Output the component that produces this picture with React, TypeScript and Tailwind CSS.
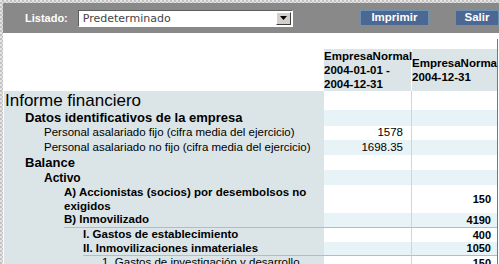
const rows = [
  { label: "Informe financiero", cell: "pl-[1px]", inner: "", text: "text-[17px] leading-[19px]", h: "h-[19px]", v1: "", v2: "" },
  { label: "Datos identificativos de la empresa", cell: "pl-[21px]", inner: "", text: "text-[13px] font-bold", h: "h-[16px]", v1: "", v2: "" },
  { label: "Personal asalariado fijo (cifra media del ejercicio)", cell: "pl-[40px]", inner: "", text: "text-[11.5px]", h: "h-[14px]", v1: "1578", v2: "" },
  { label: "Personal asalariado no fijo (cifra media del ejercicio)", cell: "pl-[40px]", inner: "", text: "text-[11.5px]", h: "h-[15px]", v1: "1698.35", v2: "" },
  { label: "Balance", cell: "pl-[21px]", inner: "", text: "text-[13px] font-bold", h: "h-[15px]", v1: "", v2: "" },
  { label: "Activo", cell: "pl-[40px]", inner: "", text: "text-[12px] font-bold", h: "h-[15px]", v1: "", v2: "" },
  { label: "A) Accionistas (socios) por desembolsos no exigidos", cell: "pl-[60px] pr-[6px]", inner: "", text: "text-[11.5px] font-bold leading-[14px]", h: "h-[28px]", v1: "", v2: "150" },
  { label: "B) Inmovilizado", cell: "pl-[60px]", inner: "", text: "text-[11.5px] font-bold", h: "h-[14px]", v1: "", v2: "4190" },
  { label: "I. Gastos de establecimiento", cell: "pl-[60px]", inner: "border-t border-[#a9c1c8] pl-[19px]", text: "text-[11.5px] font-bold", h: "h-[15px]", v1: "", v2: "400" },
  { label: "II. Inmovilizaciones inmateriales", cell: "pl-[79px]", inner: "", text: "text-[11.5px] font-bold", h: "h-[13px]", v1: "", v2: "1050" },
  { label: "1. Gastos de investigación y desarrollo", cell: "pl-[79px]", inner: "border-t border-[#a9c1c8] pl-[19px]", text: "text-[11.5px]", h: "h-[15px]", v1: "", v2: "150" },
];

function Toolbar() {
  return (
    <div className="flex h-[30px] items-center bg-[#898989] pl-[22px]">
      <span className="text-[11px] font-bold text-white">Listado:</span>

      {/* select */}
      <div className="ml-[10px] flex h-[17px] w-[224px] items-center border border-t-[#5e5e5e] border-l-[#5e5e5e] border-b-white border-r-white bg-white">
        <span className="flex-1 pl-[4px] font-['DejaVu_Sans',sans-serif] text-[11px] leading-none text-[#444]">
          Predeterminado
        </span>
        <div className="mr-[1px] flex h-[13px] w-[15px] items-center justify-center border border-t-white border-l-white border-b-[#404040] border-r-[#404040] bg-[#d4d0c8]">
          <svg width="7" height="4" viewBox="0 0 7 4">
            <path d="M0 0h7L3.5 4z" fill="#000" />
          </svg>
        </div>
      </div>

      <button className="ml-[67px] h-[16px] w-[72px] border border-[#6a93b3] bg-[#4b6792] text-[11.5px] leading-none font-bold text-white">
        Imprimir
      </button>
      <button className="ml-[26px] h-[16px] w-[44px] shrink-0 border border-[#6a93b3] bg-[#4b6792] text-[11.5px] leading-none font-bold text-white">
        Salir
      </button>
    </div>
  );
}

function Report() {
  return (
    <div className="flex h-[231px] bg-white">
      <div className="pt-[16px] pl-[1px]">
        {/* column headers */}
        <div className="flex h-[42px]">
          <div className="w-[320px]" />
          <div className="flex w-[88px] items-center border-r border-white bg-[#dbe5e7] text-[11.5px] leading-[14px] font-bold text-black">
            <div>
              EmpresaNormal
              <br />
              2004-01-01 -
              <br />
              2004-12-31
            </div>
          </div>
          <div className="flex w-[85px] items-center overflow-hidden bg-[#dbe5e7] text-[11.5px] leading-[14px] font-bold whitespace-nowrap text-black">
            <div>
              EmpresaNormal
              <br />
              2004-12-31
            </div>
          </div>
        </div>

        {/* rows */}
        {rows.map((row, i) => {
          const stripe = i % 2 === 0 ? "bg-white" : "bg-[#e7f3f7]";
          const line = row.inner ? "border-t border-[#a9c1c8]" : "";
          return (
            <div key={row.label} className={`flex ${row.h}`}>
              <div className={`w-[320px] bg-[#dbe5e7] ${row.cell}`}>
                <div className={`flex h-full items-center whitespace-normal text-black ${row.inner} ${row.text}`}>
                  <span>{row.label}</span>
                </div>
              </div>
              <div className={`flex w-[88px] items-center justify-end border-r border-r-[#c8d9de] pr-[8px] text-[11.5px] text-black ${stripe} ${line}`}>
                {row.v1}
              </div>
              <div className={`flex w-[85px] items-center justify-end pr-[6px] text-[11px] font-bold text-black ${stripe} ${line}`}>
                {row.v2}
              </div>
            </div>
          );
        })}
      </div>

      <div className="mt-[6px] w-[1px] bg-[#3f8f9a]" />
    </div>
  );
}

export default function App() {
  return (
    <div className="h-[264px] w-[499px] overflow-hidden bg-[conic-gradient(#c2c2c2_25%,#e4e4e4_0_50%,#c2c2c2_0_75%,#e4e4e4_0)] bg-[length:4px_4px] pt-[3px] pl-[3px] font-['Liberation_Sans',Arial,sans-serif]">
      <Toolbar />
      <Report />
    </div>
  );
}
